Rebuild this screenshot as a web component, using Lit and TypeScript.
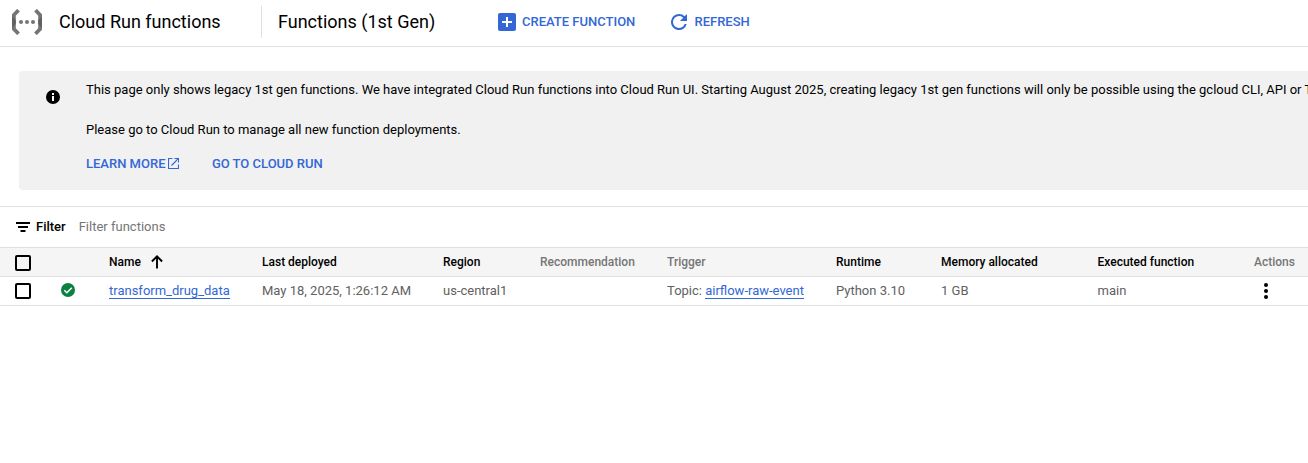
import { LitElement, html, css, svg } from "lit";
import { customElement } from "lit/decorators.js";

interface Column {
  label: string;
  muted?: boolean;
  sorted?: boolean;
}

const columns: Column[] = [
  { label: "Name", sorted: true },
  { label: "Last deployed" },
  { label: "Region" },
  { label: "Recommendation", muted: true },
  { label: "Trigger", muted: true },
  { label: "Runtime" },
  { label: "Memory allocated" },
  { label: "Executed function" },
  { label: "Actions", muted: true },
];

const icon = (cls: string, w: number, h: number, body: unknown) =>
  html`<svg class=${cls} width=${w} height=${h} viewBox="0 0 ${w} ${h}" aria-hidden="true">${body}</svg>`;

const logo = icon("logo", 30, 26, svg`
  <path d="M6.500 1.200L1.900 6V20L6.500 24.800M23.500 1.200L28.100 6V20L23.500 24.800" fill="none" stroke="#757575" stroke-width="3.800"/>
  <path d="M0 7.500L3.800 11V15L0 19zM30 7.500L26.200 11V15L30 19z" fill="#616161"/>
  <circle cx="9" cy="13" r="2" fill="#757575"/><circle cx="15" cy="13" r="2" fill="#757575"/><circle cx="21" cy="13" r="2" fill="#757575"/>`);
const plus = icon("plus", 18, 18, svg`
  <rect width="18" height="18" rx="2" fill="#3367d6"/>
  <path d="M9 4v10M4 9h10" stroke="#fff" stroke-width="2"/>`);
const refresh = icon("refresh", 16, 16, svg`
  <path d="M13.650 2.350A7.960 7.960 0 0 0 8 0a8 8 0 1 0 7.730 10h-2.080A6 6 0 1 1 8 2c1.660 0 3.140.690 4.220 1.780L9 7h7V0z" fill="#3367d6"/>`);
const info = icon("info", 14, 14, svg`
  <circle cx="7" cy="7" r="7"/><path d="M6 3h2v2H6zM6 6h2v5H6z" fill="#fff"/>`);
const external = icon("external", 11, 11, svg`
  <path d="M4.500.5H.5v10h10V6.500M6.500.5h4v4M10.500.5L3.500 7.500" fill="none" stroke="#3367d6" stroke-width="1.100"/>`);
const filter = icon("filter", 14, 10, svg`
  <path d="M0 1h14M2 5h10M4.500 9h5" stroke="#000" stroke-width="2"/>`);
const arrow = icon("arrow", 12, 14, svg`
  <path d="M6 13.500V1.500M.9 6.500L6 1.400l5.100 5.100" fill="none" stroke="#000" stroke-width="1.900"/>`);
const check = icon("check", 14, 14, svg`
  <circle cx="7" cy="7" r="7" fill="#0b8043"/><path d="M3.300 7.200l2.500 2.500 5-5" fill="none" stroke="#fff" stroke-width="1.500"/>`);
const more = icon("more", 4, 16, svg`
  <circle cx="2" cy="2" r="2"/><circle cx="2" cy="8" r="2"/><circle cx="2" cy="14" r="2"/>`);

@customElement("app-root")
export class AppRoot extends LitElement {
  static styles = css`
    :host {
      display: block;
      height: 463px;
      overflow: hidden;
      background: #fff;
      color: #000;
      font: 13px/20px Roboto, sans-serif;
      white-space: nowrap;
    }
    svg { display: block; flex: none; }
    a { color: #3367d6; text-decoration: none; }
    .topbar {
      display: flex;
      align-items: center;
      height: 44px;
      padding: 0 0 2px 12px;
      border-bottom: 1px solid #e0e0e0;
    }
    .product { width: 202px; margin-left: 17px; font-size: 18px; }
    .page { width: 220px; height: 32px; box-sizing: border-box; padding-left: 16px; border-left: 1px solid #e0e0e0; font-size: 18px; line-height: 32px; }
    .product, .page { flex: none; }
    .command { display: flex; align-items: center; gap: 6px; color: #3367d6; font-weight: 500; }
    .create { width: 173px; margin-left: 17px; }
    .reload { gap: 7.5px; }
    .banner {
      display: flex;
      height: 119px;
      margin: 24px 0 16px 19px;
      border-radius: 4px 0 0 4px;
      background: #f1f1f1;
    }
    .info { margin: 19px 26px 0 27px; }
    .message { padding-top: 9px; }
    .message p { margin: 0 0 20px; }
    .links { display: flex; gap: 32.4px; margin-top: -6px; font-weight: 500; }
    .links a { display: flex; align-items: center; gap: 3px; }
    .external { margin-top: -2px; }
    .filterbar {
      display: flex;
      align-items: center;
      height: 40px;
      padding-left: 16px;
      border-top: 1px solid #e0e0e0;
    }
    .filter-label { margin: 0 13px 0 6px; font-weight: 500; }
    .placeholder { color: #757575; }
    .row {
      display: grid;
      grid-template-columns: 46px 48px 153px 181px 97px 127px 169px 105px 156.5px 156.5px 54px;
      align-items: center;
      height: 28px;
      padding-left: 15px;
      border-bottom: 1px solid #e0e0e0;
      color: #616161;
    }
    .head { border-top: 1px solid #e0e0e0; background: #f5f5f5; color: #000; font-size: 12px; font-weight: 500; }
    .muted { color: #757575; }
    .sorted { display: flex; align-items: center; gap: 10px; }
    .box { width: 12px; height: 12px; border: 2px solid #000; border-radius: 2px; }
    .head .box { margin-top: 2px; }
    .check { margin-top: -2px; }
    .link { display: inline-block; line-height: 15px; border-bottom: 1px solid #3367d6; }
    .more { margin-left: 10px; }
  `;

  render() {
    return html`
      <header class="topbar">
        ${logo}
        <div class="product">Cloud Run functions</div>
        <div class="page">Functions (1st Gen)</div>
        <div class="command create">${plus}<span>CREATE FUNCTION</span></div>
        <div class="command reload">${refresh}<span>REFRESH</span></div>
      </header>
      <section class="banner">
        ${info}
        <div class="message">
          <p>This page only shows legacy 1st gen functions. We have integrated Cloud Run functions into Cloud Run UI. Starting August 2025, creating legacy 1st gen functions will only be possible using the gcloud CLI, API or Terraform.</p>
          <p>Please go to Cloud Run to manage all new function deployments.</p>
          <div class="links"><a>LEARN MORE ${external}</a><a>GO TO CLOUD RUN</a></div>
        </div>
      </section>
      <div class="filterbar">
        ${filter}<span class="filter-label">Filter</span><span class="placeholder">Filter functions</span>
      </div>
      <div class="row head">
        <div class="box"></div>
        <div></div>
        ${columns.map((c) => html`<div class=${c.muted ? "muted" : c.sorted ? "sorted" : ""}>${c.label}${c.sorted ? arrow : ""}</div>`)}
      </div>
      <div class="row">
        <div class="box"></div>
        ${check}
        <div><a class="link">transform_drug_data</a></div>
        <div>May 18, 2025, 1:26:12 AM</div>
        <div>us-central1</div>
        <div></div>
        <div>Topic: <a class="link">airflow-raw-event</a></div>
        <div>Python 3.10</div>
        <div>1 GB</div>
        <div>main</div>
        ${more}
      </div>
    `;
  }
}
